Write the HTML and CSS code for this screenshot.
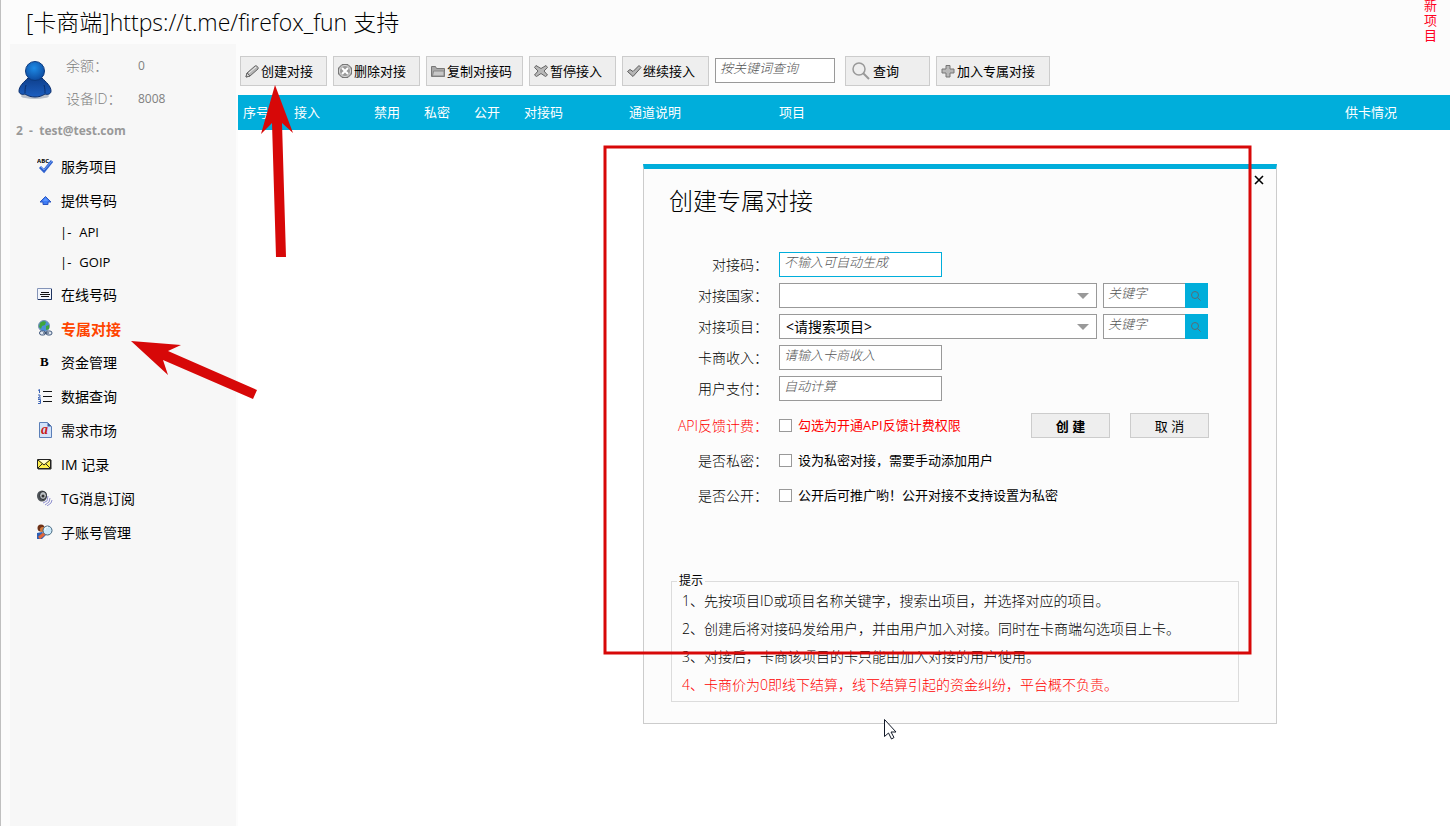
FILE: index.html
```html
<!DOCTYPE html>
<html lang="zh-CN">
<head>
    <meta charset="UTF-8">
    <meta name="viewport" content="width=device-width, initial-scale=1.0">
    <title>卡商端</title>
    <link rel="stylesheet" href="styles.css">
</head>
<body>
    <div class="window">
        <header class="titlebar">
            <h1>[卡商端]https://t.me/firefox_fun 支持</h1>
            <a class="new_item" href="#">新项目</a>
        </header>

        <div class="main">
            <aside class="sidebar">
                <div class="user">
                    <svg class="avatar" viewBox="0 0 36 42">
                        <defs>
                            <radialGradient id="head" cx="0.45" cy="0.35" r="0.65">
                                <stop offset="0" stop-color="#1e8be6"/>
                                <stop offset="1" stop-color="#0d4a9f"/>
                            </radialGradient>
                            <linearGradient id="torso" x1="0" y1="0" x2="0" y2="1">
                                <stop offset="0" stop-color="#0e3f8c"/>
                                <stop offset="1" stop-color="#1d5fc0"/>
                            </linearGradient>
                        </defs>
                        <ellipse cx="18" cy="37" rx="14" ry="3" fill="#b9bfc9"/>
                        <path d="M11 19C7 23 2 27 2 32c0 3 3 4 6 3 3 2 6 3 10 3s7-1 10-3c3 1 6 0 6-3 0-5-5-9-9-13z" fill="url(#torso)" stroke="#0b2f6d"/>
                        <path d="M9 26c-1 3-1 6-1 8M27 26c1 3 1 6 1 8" fill="none" stroke="#0b2f6d"/>
                        <circle cx="18" cy="12" r="9.500" fill="url(#head)" stroke="#0b3a80"/>
                    </svg>
                    <dl>
                        <div><dt>余额：</dt><dd>0</dd></div>
                        <div><dt>设备ID：</dt><dd>8008</dd></div>
                    </dl>
                </div>
                <div class="account">2&nbsp; -&nbsp; test@test.com</div>

                <nav class="menu">
                    <a href="#">
                        <svg viewBox="0 0 16 16"><path d="M3 9l4 4 8-10" fill="none" stroke="#2f62cf" stroke-width="3"/><path d="M4 9l3 3 8-9" fill="none" stroke="#6e9bf0"/><text class="abc" x="0" y="5" font-size="6">ABC</text></svg>
                        服务项目</a>
                    <a href="#">
                        <svg viewBox="0 0 16 16"><path d="M8.500 4.500L14 10h-3v2.500H6V10H3z" fill="#3f7df5" stroke="#2a55c0"/><path d="M8.500 6L6 9h5z" fill="#5f98ff"/></svg>
                        提供号码</a>
                    <a class="sub" href="#"><span>|-</span>API</a>
                    <a class="sub" href="#"><span>|-</span>GOIP</a>
                    <a href="#">
                        <svg viewBox="0 0 16 16"><path d="M.5 2.500h14v11H.5z" fill="#f3f6fc" stroke="#8494b8"/><path d="M14.500 3v10.500H1" fill="none" stroke="#1e335f"/><path d="M4 6.500h8M3 8.500h10M4 10.500h8" stroke="#111"/></svg>
                        在线号码</a>
                    <a class="active" href="#">
                        <svg viewBox="0 0 16 16"><circle cx="7" cy="6" r="5.500" fill="#4c8fd8" stroke="#7a93b0"/><path d="M3 3c2-2 5-2 6-1l-1 3-3 1-1 3-2-2zM9 6l3-1v4l-3 1z" fill="#3fa53c"/><rect x="2.500" y="11" width="6" height="4" rx="2" fill="#dfe6f0" stroke="#41597d"/><rect x="9" y="11" width="6" height="4" rx="2" fill="#dfe6f0" stroke="#41597d"/><path d="M6 13h6" stroke="#263c5e"/></svg>
                        专属对接</a>
                    <a href="#">
                        <svg viewBox="0 0 16 16"><text class="letter" x="3" y="12" font-size="13">B</text></svg>
                        资金管理</a>
                    <a href="#">
                        <svg viewBox="0 0 16 16"><path d="M6 3.500h9M6 8.500h9M6 13.500h9" stroke="#111"/><path d="M1 2.500l1.500-1V5M1 7h2v1.500L1 10h3M1 11.500h2.500v4H1M1.500 13.500h2" fill="none" stroke="#3b63b5"/></svg>
                        数据查询</a>
                    <a href="#">
                        <svg viewBox="0 0 16 16"><path d="M2.500.5h8l4 4v11h-12z" fill="#d3e3fa" stroke="#5b7fb8"/><path d="M10.500.5v4h4z" fill="#3c5f9c"/><text class="letter letter_a" x="4" y="12" font-size="14">a</text></svg>
                        需求市场</a>
                    <a href="#">
                        <svg viewBox="0 0 16 16"><path d="M.5 3.500h13v9H.5z" fill="#fff04a" stroke="#222"/><path d="M2 4h10L7 8z" fill="#fffbd0"/><path d="M1 4l6 5 6-5M1 12l4-4M13 12L9 8" fill="none" stroke="#222"/><path d="M14 4v9H1" fill="none" stroke="#222"/></svg>
                        IM 记录</a>
                    <a href="#">
                        <svg viewBox="0 0 16 16"><ellipse cx="5" cy="6" rx="5" ry="5.500" fill="#4e5358"/><ellipse cx="6" cy="5.500" rx="3.500" ry="4" fill="#b9bec2" stroke="#24282c"/><circle cx="6" cy="6" r="1.500" fill="#333"/><path d="M11 6l-1 5-4 2M13 8l-1 4-4 3M15 10l-1 3-4 3" fill="none" stroke="#8f90cf"/></svg>
                        TG消息订阅</a>
                    <a href="#">
                        <svg viewBox="0 0 16 16"><circle cx="4" cy="4" r="3.500" fill="#6e3217"/><circle cx="5.500" cy="5.500" r="2.500" fill="#d77c3c"/><path d="M0 15V9l5-1 4 3-4 4z" fill="#2c5fb5"/><path d="M2 14l6-5" stroke="#e0663a" stroke-width="3"/><circle cx="10.500" cy="6.500" r="4.500" fill="#cdeafa" stroke="#44657d"/><path d="M8 6c0-2 1-3 3-3" fill="none" stroke="#fff"/></svg>
                        子账号管理</a>
                </nav>
            </aside>

            <section class="content">
                <div class="toolbar">
                    <button class="btn">
                        <svg viewBox="0 0 16 16"><path d="M2 14l1-4 8-7c1-1 4 1 3 3l-8 7z" fill="#b5b5b5" stroke="#666"/><path d="M5 10l7-6" stroke="#eee"/><path d="M2 14l1-4 3 3z" fill="#ddd" stroke="#666"/></svg>创建对接</button>
                    <button class="btn">
                        <svg viewBox="0 0 16 16"><path d="M5 1.500h6L14.500 5v6L11 14.500H5L1.500 11V5z" fill="#999" stroke="#777"/><circle cx="8" cy="8" r="5.500" fill="none" stroke="#ddd"/><path d="M5 5l6 6M11 5l-6 6" stroke="#fff" stroke-width="2"/></svg>删除对接</button>
                    <button class="btn">
                        <svg viewBox="0 0 16 16"><path d="M1.500 13.500v-10h4l1 2h8v8z" fill="#a9a9a9" stroke="#777"/><path d="M2.500 13l1-5h10.500v5z" fill="#c8c8c8" stroke="#888"/></svg>复制对接码</button>
                    <button class="btn">
                        <svg viewBox="0 0 16 16"><path d="M3 2.500l5 3 5-3 1.500 2L11 8l3.500 4-2 1.500-4.500-3-4.500 3-2-1.500L5 8 1.500 4.500z" fill="#b8b8b8" stroke="#666"/></svg>暂停接入</button>
                    <button class="btn">
                        <svg viewBox="0 0 16 16"><path d="M1.500 8.500L4 6.500l3 2 6-6 2 2L7 13.500z" fill="#b5b5b5" stroke="#5c5c5c"/></svg>继续接入</button>
                    <input class="field search" type="text" aria-label="按关键词查询" placeholder="按关键词查询">
                    <button class="btn query">
                        <svg viewBox="0 0 18 18"><circle cx="7" cy="7" r="6" fill="none" stroke="#999" stroke-width="1.500"/><path d="M11 11l6 6" stroke="#999" stroke-width="2"/></svg>查询</button>
                    <button class="btn join">
                        <svg viewBox="0 0 16 16"><path d="M6 2.500h4V6h4v4h-4v4H6v-4H2V6h4z" fill="#b8b8b8" stroke="#777"/></svg>加入专属对接</button>
                </div>

                <table class="grid">
                    <thead>
                        <tr>
                            <th class="w_no">序号</th>
                            <th class="w_join">接入</th>
                            <th class="w_flag">禁用</th>
                            <th class="w_flag">私密</th>
                            <th class="w_flag">公开</th>
                            <th class="w_code">对接码</th>
                            <th class="w_note">通道说明</th>
                            <th>项目</th>
                            <th class="w_supply">供卡情况</th>
                        </tr>
                    </thead>
                </table>

                <form class="dialog" role="dialog" aria-labelledby="dialog_title">
                    <button class="close" type="button" aria-label="关闭">
                        <svg viewBox="0 0 10 10"><path d="M1 1l8 8M9 1L1 9" stroke="#000" stroke-width="1.600"/></svg>
                    </button>
                    <h2 id="dialog_title">创建专属对接</h2>

                    <div class="row">
                        <label for="code">对接码：</label>
                        <input class="field focus" id="code" type="text" placeholder="不输入可自动生成">
                    </div>
                    <div class="row">
                        <label for="country">对接国家：</label>
                        <div class="select">
                            <select id="country"><option></option></select>
                        </div>
                        <div class="keyword">
                            <input class="field" type="text" aria-label="国家关键字" placeholder="关键字">
                            <button type="button" aria-label="搜索国家">
                                <svg viewBox="0 0 10 10"><circle cx="4" cy="4" r="3.500" fill="none" stroke="#5a6b73"/><path d="M6.500 6.500l3 3" stroke="#5a6b73"/></svg>
                            </button>
                        </div>
                    </div>
                    <div class="row">
                        <label for="project">对接项目：</label>
                        <div class="select">
                            <select id="project"><option>&lt;请搜索项目&gt;</option></select>
                        </div>
                        <div class="keyword">
                            <input class="field" type="text" aria-label="项目关键字" placeholder="关键字">
                            <button type="button" aria-label="搜索项目">
                                <svg viewBox="0 0 10 10"><circle cx="4" cy="4" r="3.500" fill="none" stroke="#5a6b73"/><path d="M6.500 6.500l3 3" stroke="#5a6b73"/></svg>
                            </button>
                        </div>
                    </div>
                    <div class="row">
                        <label for="income">卡商收入：</label>
                        <input class="field" id="income" type="text" placeholder="请输入卡商收入">
                    </div>
                    <div class="row">
                        <label for="pay">用户支付：</label>
                        <input class="field" id="pay" type="text" placeholder="自动计算">
                    </div>

                    <div class="options">
                        <div class="row check red">
                            <label for="api">API反馈计费：</label>
                            <input id="api" type="checkbox">
                            <label class="desc" for="api">勾选为开通API反馈计费权限</label>
                            <div class="actions">
                                <button class="btn primary" type="submit">创 建</button>
                                <button class="btn" type="button">取 消</button>
                            </div>
                        </div>
                        <div class="row check">
                            <label for="private">是否私密：</label>
                            <input id="private" type="checkbox">
                            <label class="desc" for="private">设为私密对接，需要手动添加用户</label>
                        </div>
                        <div class="row check">
                            <label for="public">是否公开：</label>
                            <input id="public" type="checkbox">
                            <label class="desc" for="public">公开后可推广哟！公开对接不支持设置为私密</label>
                        </div>
                    </div>

                    <fieldset class="tips">
                        <legend>提示</legend>
                        <p>1、先按项目ID或项目名称关键字，搜索出项目，并选择对应的项目。</p>
                        <p>2、创建后将对接码发给用户，并由用户加入对接。同时在卡商端勾选项目上卡。</p>
                        <p>3、对接后，卡商该项目的卡只能由加入对接的用户使用。</p>
                        <p class="red">4、卡商价为0即线下结算，线下结算引起的资金纠纷，平台概不负责。</p>
                    </fieldset>
                </form>
            </section>
        </div>

        <!-- 操作指引标注 -->
        <svg class="marks" width="1300" height="760" viewBox="0 0 1300 760">
            <rect x="605" y="147" width="645" height="506" fill="none" stroke="#d70808" stroke-width="3"/>
            <path d="M275 85l18 48-11-10 4 134h-10l-4-134-11 11z" fill="#d70808"/>
            <path d="M131 341l50 4-13 6 89 39-4 9-90-39 5 15z" fill="#d70808"/>
            <path d="M884.500 719.500v17l4-3.500 3 6 2.500-1.500-3-5.500h5z" fill="#fff" stroke="#111827"/>
        </svg>
    </div>
</body>
</html>
```

FILE: styles.css
```css
*{
    box-sizing: border-box;
}
body{
    margin: 0;
    font-family: "Open Sans", "Noto Sans CJK SC", sans-serif;
    font-size: 13px;
    color: #000;
}
button, input, select{
    font: inherit;
    color: inherit;
}
h1, h2, p, dl, dd{
    margin: 0;
    font-weight: 300;
}
a{
    color: inherit;
    text-decoration: none;
}
.window{
    position: relative;
    display: flex;
    flex-direction: column;
    min-height: 100vh;
    overflow: hidden;
    background-color: #fcfcfc;
    border-left: 1px solid #c0c0c0;
}
.titlebar{
    display: flex;
    justify-content: space-between;
    align-items: center;
    height: 44px;
    padding: 0 13px 0 25px;
}
    .titlebar h1{
        font-size: 23px;
        line-height: 44px;
    }
    .new_item{
        align-self: flex-start;
        width: 13px;
        margin-top: -2px;
        line-height: 15px;
        color: #ff0022;
    }
.main{
    display: flex;
    flex: 1;
    padding-left: 9px;
}

/* 左侧栏 */
.sidebar{
    width: 228px;
    flex: none;
    background-color: #f7f7f7;
    border-right: 2px solid #fcfcfc;
}
    .user{
        display: flex;
        gap: 13px;
        padding: 5px 0 0 7px;
    }
        .avatar{
            width: 36px;
            height: 42px;
            margin-top: 10px;
        }
        .user dl div{
            display: flex;
            line-height: 33px;
            color: #808080;
        }
        .user dt{
            width: 72px;
            font-size: 14px;
            font-weight: 300;
        }
        .user dd{
            font-size: 12px;
            font-weight: 400;
        }
    .account{
        padding-left: 6px;
        font-size: 12px;
        line-height: 32px;
        font-weight: bold;
        color: #999;
    }
    .menu{
        padding-top: 2px;
    }
        .menu a{
            display: flex;
            align-items: center;
            gap: 8px;
            height: 34px;
            padding-left: 27px;
            font-size: 14px;
        }
        .menu svg{
            width: 16px;
            height: 16px;
        }
        .menu .sub{
            height: 30px;
            padding-left: 50px;
            font-size: 13px;
        }
        .menu .active{
            color: #ff4500;
            font-size: 15px;
            font-weight: bold;
        }
        .abc{
            font-weight: bold;
        }
        .letter{
            font-family: "Liberation Serif", serif;
            font-weight: bold;
        }
        .letter_a{
            font-style: italic;
            fill: #c8201a;
        }

/* 右侧内容 */
.content{
    position: relative;
    flex: 1;
    min-width: 0;
    background-color: #fff;
}
    .toolbar{
        display: flex;
        align-items: center;
        gap: 6px;
        height: 51px;
        padding: 2px 2px 0;
        background-color: #fcfcfc;
    }
    .btn{
        display: flex;
        align-items: center;
        min-width: 87px;
        height: 30px;
        padding: 0 10px 0 3px;
        background-color: #eee;
        border: 1px solid #ccc;
        white-space: nowrap;
    }
        .btn svg{
            width: 16px;
            height: 16px;
            margin-right: 1px;
        }
    .query{
        gap: 2px;
        min-width: 85px;
        margin-left: 4px;
        padding: 0 28px 0 6px;
    }
        .query svg{
            width: 18px;
            height: 18px;
        }
    .join{
        padding-right: 14px;
    }
    .field{
        width: 163px;
        height: 25px;
        padding: 0 4px 6px;
        background-color: #fff;
        border: 1px solid #999;
        border-radius: 0;
        outline: none;
    }
        .field::placeholder{
            color: #555;
            font-style: italic;
            font-weight: 300;
            opacity: 1;
        }
    .search{
        width: 120px;
    }
    .focus{
        border-color: #00aedb;
    }
    .grid{
        width: 100%;
        table-layout: fixed;
        border-collapse: collapse;
        background-color: #00aedb;
        color: #fff;
    }
        .grid th{
            height: 35px;
            padding: 0 5px 2px;
            font-weight: 400;
            text-align: left;
        }
        .w_no{ width: 51px; }
        .w_join{ width: 80px; }
        .w_flag{ width: 50px; }
        .w_code{ width: 105px; }
        .w_note{ width: 150px; }
        .w_supply{ width: 110px; }

/* 创建对接弹窗 */
.dialog{
    position: absolute;
    top: 120px;
    left: 405px;
    width: 634px;
    padding: 14px 37px 21px 27px;
    background-color: #fcfcfc;
    border: 1px solid #ccc;
    border-top: 5px solid #00aedb;
}
    .dialog h2{
        margin: 0 0 30px -2px;
        font-size: 24px;
        line-height: 36px;
    }
    .close{
        position: absolute;
        top: 1px;
        right: 7px;
        width: 20px;
        height: 20px;
        padding: 5px;
        background: none;
        border: 0;
    }
        .close svg{
            display: block;
            width: 10px;
            height: 10px;
        }
    .row{
        display: flex;
        align-items: center;
        height: 31px;
    }
        .row label{
            width: 97px;
            margin-right: 11px;
            padding-bottom: 2px;
            font-size: 14px;
            font-weight: 300;
            text-align: right;
            white-space: nowrap;
        }
    .select{
        position: relative;
        width: 318px;
        margin-right: 6px;
    }
        .select::after{
            content: "";
            position: absolute;
            top: 10px;
            right: 8px;
            border: 6px solid transparent;
            border-top-color: #999;
            border-bottom: 0;
            pointer-events: none;
        }
        .select select{
            display: block;
            width: 100%;
            height: 25px;
            padding: 0 6px;
            font-size: 14px;
            background-color: #fff;
            border: 1px solid #999;
            border-radius: 0;
            appearance: none;
        }
    .keyword{
        display: flex;
        width: 105px;
    }
        .keyword .field{
            flex: 1;
            min-width: 0;
            border-right: 0;
        }
        .keyword button{
            width: 23px;
            padding: 0 6px;
            background-color: #00aedb;
            border: 0;
        }
        .keyword svg{
            display: block;
            width: 10px;
            height: 10px;
        }
    .options{
        padding-top: 4px;
    }
    .check{
        height: 35px;
    }
        .check input{
            width: 13px;
            height: 13px;
            margin: 0;
            background-color: #fff;
            border: 1px solid #999;
            appearance: none;
        }
            .check input:checked{
                background-color: #00aedb;
            }
        .check .desc{
            width: auto;
            margin: 0 0 0 6px;
            font-size: 13px;
            font-weight: 400;
        }
    .red{
        color: #ff0000;
    }
    .actions{
        display: flex;
        gap: 20px;
        margin-left: auto;
        margin-right: 30px;
        color: #000;
    }
        .actions .btn{
            justify-content: center;
            min-width: 79px;
            height: 25px;
            padding: 0;
        }
        .actions .primary{
            font-weight: bold;
        }
    .tips{
        margin: 62px 0 0;
        padding: 0 10px 2px;
        border: 1px solid #dcdcdc;
    }
        .tips legend{
            margin-left: -5px;
            padding: 0 2px;
            font-size: 12px;
            line-height: 12px;
        }
        .tips p{
            font-size: 14px;
            line-height: 28px;
            white-space: nowrap;
        }

.marks{
    position: absolute;
    top: 0;
    left: -1px;
    pointer-events: none;
}
```
